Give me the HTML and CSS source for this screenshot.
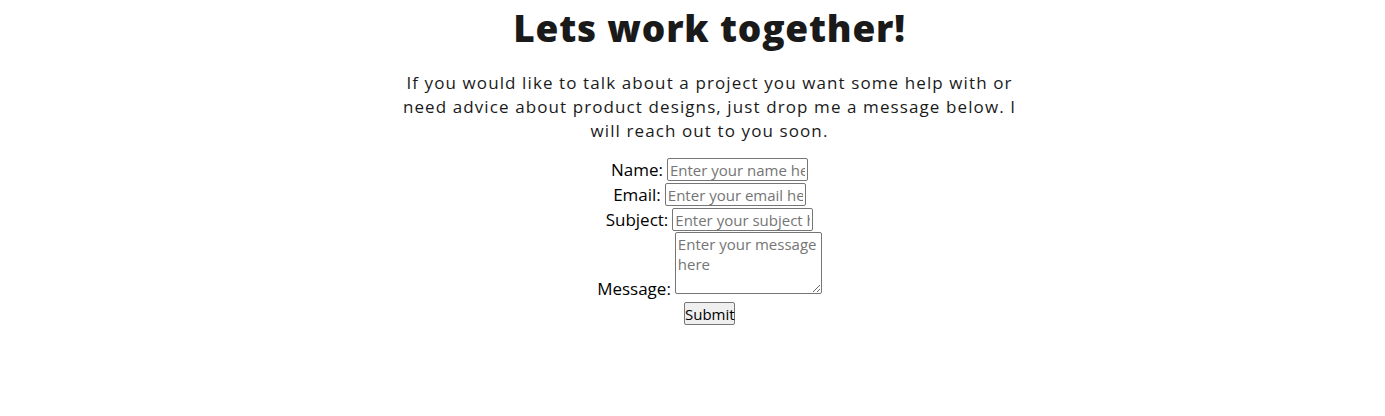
FILE: index.html
```html
<!DOCTYPE html>
<html lang="en">
<head>
<meta charset="utf-8">
<title>Contact</title>
<link rel="stylesheet" href="styles.css">
</head>
<body>
<main class="contact">
  <h1 class="title">Lets work together!</h1>
  <p class="intro">If you would like to talk about a project you want some help with or need advice about product designs, just drop me a message below. I will reach out to you soon.</p>
  <form class="form">
    <div class="row"><label class="label" for="name">Name:</label><input class="field" id="name" type="text" placeholder="Enter your name here"></div>
    <div class="row"><label class="label" for="email">Email:</label><input class="field" id="email" type="email" placeholder="Enter your email here"></div>
    <div class="row"><label class="label" for="subject">Subject:</label><input class="field" id="subject" type="text" placeholder="Enter your subject here"></div>
    <div class="row row-msg"><label class="label" for="message">Message:</label><textarea class="area" id="message" placeholder="Enter your message here"></textarea></div>
    <div class="row row-btn"><button class="submit" type="submit">Submit</button></div>
  </form>
</main>
</body>
</html>
```

FILE: styles.css
```css
html, body {
  margin: 0;
  padding: 0;
  background: #ffffff;
}
body {
  font-family: "Open Sans", "Liberation Sans", sans-serif;
  color: #000;
}
.contact {
  padding: 0 0 0 34px;
  display: flex;
  flex-direction: column;
  align-items: center;
}
.title {
  margin: 4px 0 0;
  font-size: 37px;
  line-height: 48px;
  font-weight: 800;
  color: #1a1a1a;
  letter-spacing: 0.8px;
}
.intro {
  margin: 19px 0 0;
  width: 625px;
  text-align: center;
  font-size: 17px;
  line-height: 24px;
  letter-spacing: 1.1px;
  color: #1a1a1a;
}
.form {
  margin-top: 15px;
  display: flex;
  flex-direction: column;
  align-items: center;
  gap: 2px;
}
.row {
  display: flex;
  align-items: center;
  gap: 4px;
}
.label {
  font-size: 17px;
  line-height: 23px;
  color: #000;
}
.field {
  box-sizing: border-box;
  width: 141px;
  height: 23px;
  padding: 0 2px;
  border: 1px solid #767676;
  border-radius: 2px;
  font-family: inherit;
  font-size: 15px;
}
.field::placeholder, .area::placeholder {
  color: #757575;
}
.row-msg {
  align-items: flex-end;
  margin-top: -1px;
}
.row-msg .label {
  line-height: 20px;
  margin-bottom: -5px;
}
.area {
  box-sizing: border-box;
  width: 147px;
  height: 62px;
  padding: 1px 2px;
  border: 1px solid #767676;
  border-radius: 2px;
  font-family: inherit;
  font-size: 15px;
  line-height: 20px;
  resize: both;
}
.row-btn {
  margin-top: 6px;
}
.submit {
  box-sizing: border-box;
  width: 51px;
  height: 23px;
  padding: 0;
  border: 1px solid #767676;
  border-radius: 2px;
  background: #efefef;
  font-family: inherit;
  font-size: 15px;
  color: #000;
}
```
